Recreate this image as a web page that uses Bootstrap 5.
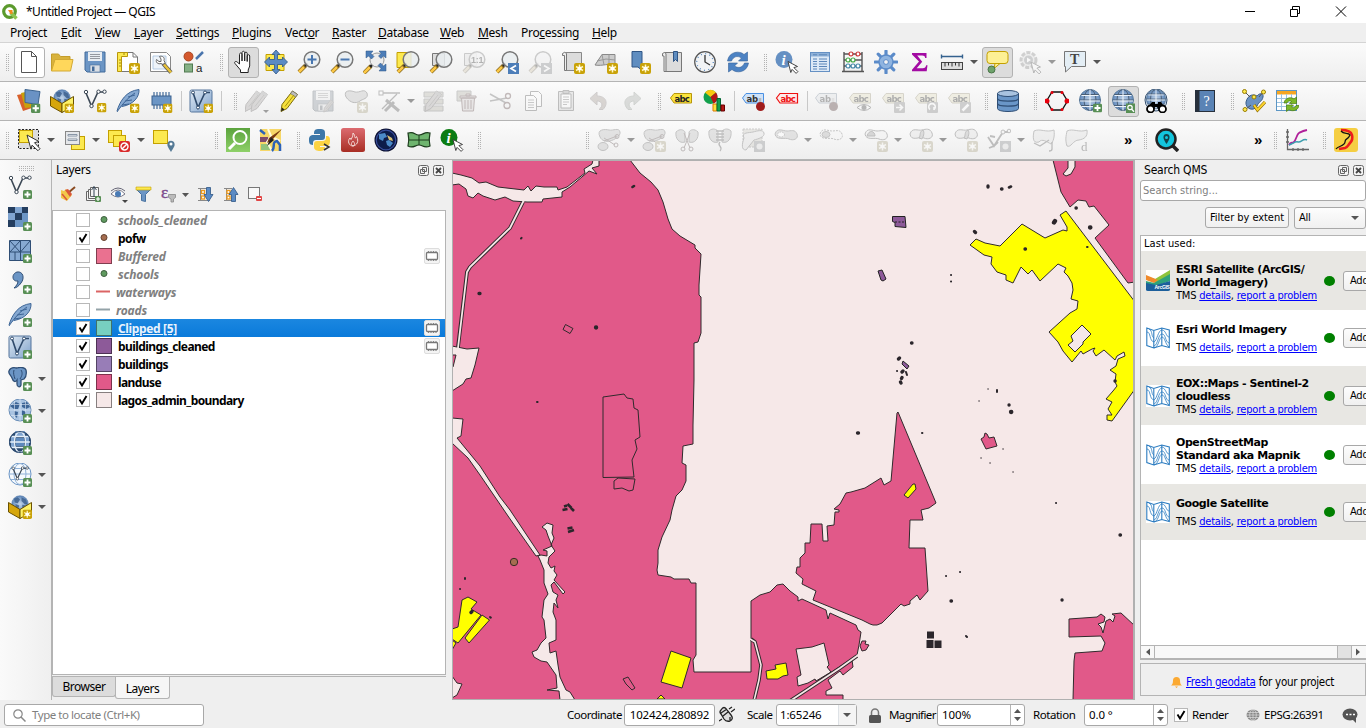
<!DOCTYPE html>
<html lang="en">
<head>
<meta charset="utf-8">
<title>*Untitled Project — QGIS</title>
<link href="https://cdn.jsdelivr.net/npm/bootstrap@5.3.0/dist/css/bootstrap.min.css" rel="stylesheet">
<script src="https://cdn.jsdelivr.net/npm/bootstrap@5.3.0/dist/js/bootstrap.bundle.min.js"></script>
<style>
html,body{height:728px;overflow:hidden}
body{width:1366px;background:#efefef;font:12px/16px "Noto Sans",sans-serif;color:#000;letter-spacing:-.3px}
svg{display:block;flex:none}
.titlebar{height:23px;background:#fff}
.ttl{letter-spacing:-.5px;margin-left:-1px}
.menubar{height:20px;background:#efefef;border-bottom:1px solid #d4d4d4;padding-left:10px;line-height:19px}
.menubar span{white-space:nowrap;flex:none}
.menubar span:nth-child(1){width:51px}.menubar span:nth-child(2){width:34px}.menubar span:nth-child(3){width:39px}
.menubar span:nth-child(4){width:42px}.menubar span:nth-child(5){width:56px}.menubar span:nth-child(6){width:53px}
.menubar span:nth-child(7){width:47px}.menubar span:nth-child(8){width:46px}.menubar span:nth-child(9){width:62px}
.menubar span:nth-child(10){width:38px}.menubar span:nth-child(11){width:43px}.menubar span:nth-child(12){width:71px}
.toolrow{height:39px;background:linear-gradient(#fbfbfb,#eeeeee);border-bottom:1px solid #b4b4b4;padding-left:12.5px;position:relative}
.toolrow::before,.grip::before,.side .hgrip{content:"";background:conic-gradient(#b2b2b2 25%,transparent 0) 0 0/2px 2px}
.toolrow::before{position:absolute;left:5px;top:11px;width:5px;height:17px}
.tool{width:33px;height:31px;flex:none;display:flex;align-items:center;padding-left:4.5px}
.tool svg,.side svg{width:24px;height:24px}
.dd{width:45px}
.dd::after,.arw{content:"";flex:none;border:4px solid transparent;border-top-color:#555;border-bottom:0;margin-left:6px}
.off svg{opacity:.34;filter:saturate(.2)}
.off.dd::after{border-top-color:#999}
.on{position:relative}
.on svg{position:relative}
.on::before{content:"";position:absolute;left:1px;top:0;width:31px;height:31px;border:1px solid #b2b2b2;border-radius:3px;background:#dcdcdc}
.on.lite::before{background:#fff}
.grip{width:16px;height:17px;flex:none;padding-left:8.5px}
.grip::before{display:block;width:5px;height:17px}
.vsep{width:7px;height:20px;flex:none;background:linear-gradient(#c8c8c8,#c8c8c8) 3px 0/1px 100% no-repeat}
.gap1{width:25px;flex:none}.gap2{width:92px;flex:none}.gap3{width:27.5px;flex:none}.gap4{width:67.5px;flex:none}
.more{width:13.5px;flex:none;font:700 15px/18px "Liberation Sans",sans-serif;padding-left:3px}
.side{width:52px;background:linear-gradient(90deg,#fafafa,#efefef);border-right:1px solid #b4b4b4;padding:6px 0 0 8px}
.side .hgrip{width:17px;height:5px;margin-left:10px}
.side .tl{height:32px;display:flex;align-items:center}
.dock{width:394px}
.docktitle{height:19px;padding:1px 2px 0 4px;line-height:19px}
.lt{margin-top:-2px}
.tree{height:465px;background:#fff;border:1px solid #b4b4b4;margin-top:1px}
.trow{height:18px;padding:2px 0 0 23px;font-weight:700;letter-spacing:-.58px;line-height:16px}
.trow.dim{font-style:italic;color:#808080;letter-spacing:-.15px}
.trow.sel{background:linear-gradient(#1b87e0,#0a7ada);color:#e8f2fc;letter-spacing:-.35px}
.chk{width:14px;height:14px;background:#fff;border:1px solid #b8b8b8;flex:none}
.trow .chk,.trow .sym,.trow .chip{position:relative;top:-1px}
.sym{width:16px;height:16px;margin:0 6px;flex:none}
.sw{border:1px solid rgba(0,0,0,.45)}
.chip{margin-left:auto;margin-right:5px;width:16px;height:16px;background:#f4f4f4;border:1px solid #ddd;border-radius:2px}
.tabx{border:1px solid #b4b4b4;border-top:0;border-radius:0 0 3px 3px;text-align:center;letter-spacing:-.5px}
.mapbox{width:683px;border:1px solid #b0b0b0;border-right:2px solid #b0b0b0;margin-left:6px}
.qms{width:226px;font-family:"DejaVu Sans Condensed","DejaVu Sans",sans-serif;font-size:11px;letter-spacing:-.2px}
.qt{font-size:12px}
.fld{background:#fff;border:1px solid #a8a8a8;border-radius:3px}
.btx{background:linear-gradient(#fdfdfd,#f0f0f0);border:1px solid #a8a8a8;border-radius:3px;white-space:nowrap}
.qlist{height:425px;background:#fff;border:1px solid #b4b4b4;border-right:0;overflow:hidden}
.qrow{padding-left:5px;line-height:13px}
.qrow:nth-child(even){background:#e8e7e3}
.qrow b{font-family:"DejaVu Sans",sans-serif;font-size:11px;letter-spacing:-.43px;display:block}
.qrow b.one{margin-bottom:5px}
.qrow u,.geo u{color:#00f}
.qtxt{width:148px;margin-left:6px;padding-top:1px;white-space:nowrap;flex:none}
.dot{width:11px;height:10px;border-radius:50%;background:#008000;flex:none}
.addb{width:40px;height:20px;line-height:18px;margin-left:8px;padding-left:6px;flex:none}
.gt{font-size:11.5px;letter-spacing:-.28px}
.status{height:28px;padding:2px 0 0 4px;font-size:11.5px;letter-spacing:-.45px}
.status>*{flex:none;white-space:nowrap}
</style>
</head>
<body>
<svg width="0" height="0" class="position-absolute">
<defs>
<linearGradient id="gBlue" x1="0" y1="0" x2="1" y2="1"><stop offset="0" stop-color="#dfe9f3"/><stop offset="1" stop-color="#7fa2cb"/></linearGradient>
<radialGradient id="gSky"><stop offset="0" stop-color="#c4d6ea"/><stop offset="1" stop-color="#5f88bb"/></radialGradient>
<linearGradient id="gGreen" x1="0" y1="0" x2="0" y2="1"><stop offset="0" stop-color="#5ba33d"/><stop offset="1" stop-color="#8ed068"/></linearGradient>
<linearGradient id="gLeather" x1="0" y1="0" x2="0" y2="1"><stop offset="0" stop-color="#dc6b70"/><stop offset="1" stop-color="#a82e24"/></linearGradient>
</defs>
</svg>
<svg class="d-none">
<symbol id="plus" viewBox="0 0 9 9"><rect width="9" height="9" rx="1.500" fill="#588f55"/><path d="M4.500 1.500v6M1.500 4.500h6" stroke="#fff" stroke-width="1.800"/></symbol>
<symbol id="star" viewBox="0 0 11 11"><rect width="11" height="11" rx="2" fill="#c9a208"/><path d="M5.500 1.500v8M2 3.500l7 4M9 3.500l-7 4" stroke="#fff6c0" stroke-width="1.500"/><circle cx="5.500" cy="5.500" r="2" fill="#fff"/></symbol>
<symbol id="lens" viewBox="0 0 24 24"><path d="M2 22l6.500-6.500" stroke="#8a6a20" stroke-width="4"/><path d="M2 22l5-5" stroke="#fcc845" stroke-width="2.500"/><path d="M8 16l2.500-2.500" stroke="#222" stroke-width="2.500"/><circle cx="15" cy="9.500" r="7.800" fill="#e9edf0" fill-opacity=".85" stroke="#777" stroke-width="1.500"/></symbol>
<symbol id="cursor" viewBox="0 0 12 12"><path d="M1 0l9.500 5-3.600 1.100 4 4-1.800 1.800-4-4L3.800 11z" fill="#fff" stroke="#333" stroke-width=".9"/></symbol>
<symbol id="new" viewBox="0 0 24 24"><path d="M4.500 1.500h10l5 5v16h-15z" fill="#fff" stroke="#555"/><path d="M14.500 1.500v5h5" fill="none" stroke="#555"/></symbol>
<symbol id="open" viewBox="0 0 24 24"><path d="M1.500 21V4h7l2 2.500H20V10" fill="#d8b23c" stroke="#c49d2b"/><path d="M1.500 21L5 9.500h18L20.500 21z" fill="#ffd75b" stroke="#d2a934"/></symbol>
<symbol id="save" viewBox="0 0 24 24"><path d="M2 2h20v20H4l-2-2z" fill="#6b95c5" stroke="#426a99"/><rect x="5" y="2" width="14" height="9" fill="#e8edf2"/><path d="M7 4.500h10M7 6.500h10M7 8.500h10" stroke="#8a8f95" stroke-width=".9"/><rect x="7" y="15" width="10" height="7" fill="#d9dee4" stroke="#426a99" stroke-width=".6"/><rect x="9" y="16.500" width="2.500" height="4.500" fill="#426a99"/></symbol>
<symbol id="layout" viewBox="0 0 24 24"><path d="M4 2.500h13l4.500 4.500v14.500H4z" fill="#fff" stroke="#777"/><path d="M17 2.500V7h4.500" fill="none" stroke="#777"/><path d="M1.500 2.500h10v4h-6v15h-4z" fill="#fce94f" stroke="#b8960c"/><path d="M3 10h2M3 13h2M3 16h2M8 3v2" stroke="#8a7000" stroke-width=".8"/><use href="#star" x="13" y="13" width="11" height="11"/></symbol>
<symbol id="manager" viewBox="0 0 24 24"><path d="M1.500 2.500h16l4 4v15h-20z" fill="#fff" stroke="#888"/><path d="M4 6h13v13H4z" fill="#eef4fa" stroke="#a4c0de" stroke-width=".8"/><path d="M14 13.500l8 9" stroke="#555" stroke-width="4"/><path d="M15 14.500l7 8" stroke="#e8c23a" stroke-width="2.600"/><path d="M10.500 6.500c3-1 5.500 1 4.500 4l1 2-2 2-2-1c-3 1-5.500-1-4.500-4l2.500 2h2V9z" fill="#fff" stroke="#666"/></symbol>
<symbol id="style" viewBox="0 0 24 24"><circle cx="6.500" cy="6.500" r="4.500" fill="#d4582d" stroke="#a84420"/><path d="M14 9l7-7" stroke="#4a75ad" stroke-width="2.500"/><rect x="2.500" y="14" width="8" height="8" fill="#85b085" stroke="#507a50"/><text x="14" y="21.500" font-family="Liberation Sans" font-size="11.500" fill="#222">a</text></symbol>
<symbol id="hand" viewBox="0 0 24 24"><path d="M9.500 22.500V20L4 13.500c-1.200-1.800 1-2.800 2.300-1.300L8.500 14V4.500c0-2 2.500-2 2.500 0V11 2.800c0-2 2.700-2 2.700 0V11 3.500c0-1.800 2.500-1.800 2.500 0V11.500 6c0-1.700 2.500-1.700 2.500 0v10l-1.500 4v2.500z" fill="#fff" stroke="#222"/></symbol>
<symbol id="pansel" viewBox="0 0 24 24"><path d="M2 4.500h18v16H2z" fill="#fce94f" stroke="#c4a000"/><path d="M12 0l4 4.500h-2.500v5h5V7l5 5-5 5v-2.500h-5v5H16L12 24l-4-4.500h2.500v-5h-5V17l-5-5 5-5v2.500h5v-5H8z" fill="#5b8bc4" stroke="#2f5585" stroke-width=".8"/></symbol>
<symbol id="zin" viewBox="0 0 24 24"><use href="#lens"/><path d="M15 5v9M10.500 9.500h9" stroke="#4977b0" stroke-width="2"/></symbol>
<symbol id="zout" viewBox="0 0 24 24"><use href="#lens"/><path d="M10.500 9.500h9" stroke="#4977b0" stroke-width="2"/></symbol>
<symbol id="zfull" viewBox="0 0 24 24"><path d="M1 23l7-7" stroke="#8a6a20" stroke-width="4"/><path d="M1 23l6-6" stroke="#fcc845" stroke-width="2.500"/><path d="M7 17l3-3" stroke="#222" stroke-width="2.500"/><circle cx="14" cy="10" r="7" fill="#eee" stroke="#999"/><path d="M3 1h7L8 3.500l3 3-2.500 2.500-3-3L3 8zM23 1h-7l2 2.500-2.500 2.500 2.500 2.500 2.500-2.500L23 8zM23 21h-7l2-2.500-3-3 2.500-2.500 3 3L23 14z" fill="#4c7db8" stroke="#2f5585" stroke-width=".5"/></symbol>
<symbol id="zsel" viewBox="0 0 24 24"><path d="M1 2.500h14v15H1z" fill="#fce94f" stroke="#c4a000"/><use href="#lens"/></symbol>
<symbol id="zlay" viewBox="0 0 24 24"><path d="M3.500 3.500h12v12h-12z" fill="#ddd" stroke="#777"/><use href="#lens"/></symbol>
<symbol id="znat" viewBox="0 0 24 24"><path d="M2.500 3.500h12v12h-12z" fill="#ddd" stroke="#777"/><use href="#lens"/><text x="9" y="13" font-family="Liberation Sans" font-weight="700" font-size="9" fill="#333">1:1</text></symbol>
<symbol id="zlast" viewBox="0 0 24 24"><use href="#lens"/><rect x="13" y="13" width="11" height="11" fill="#4c7db8"/><path d="M21 15.500l-5 3 5 3" fill="none" stroke="#fff" stroke-width="1.700"/></symbol>
<symbol id="znext" viewBox="0 0 24 24"><use href="#lens"/><rect x="13" y="13" width="11" height="11" fill="#789"/><path d="M16 15.500l5 3-5 3" fill="none" stroke="#fff" stroke-width="1.700"/></symbol>
<symbol id="mapv" viewBox="0 0 24 24"><path d="M4.500 2.500h16v18h-16z" fill="#dcdcdc" stroke="#888"/><path d="M1.500 3.500q2.500-2.500 4 0v17h-2v-15h-2z" fill="#eee" stroke="#777"/><use href="#star" x="13" y="13" width="11" height="11"/></symbol>
<symbol id="map3" viewBox="0 0 24 24"><path d="M1 15L8 4.500h13v11c-6-3-12 1-20-.5z" fill="#ccc" stroke="#888"/><path d="M3 11l9-2 9 1M8 4.500L10 15M15 4.500v10" stroke="#999" fill="none"/><use href="#star" x="13" y="13" width="11" height="11"/></symbol>
<symbol id="bkm" viewBox="0 0 24 24"><path d="M5 1.500h10v19l-4-3.500-2 0-4 0z" fill="#5f8dc0" stroke="#2f5585"/><use href="#star" x="13" y="13" width="11" height="11"/></symbol>
<symbol id="bkms" viewBox="0 0 24 24"><path d="M4.500 2.500h17v19h-17z" fill="#dcdcdc" stroke="#777"/><path d="M2.500 3.500q2-2 3.500 0v18H4V6H2.500z" fill="#eee" stroke="#777"/><path d="M13.500 1.500h4v10l-2-2-2 2z" fill="#5f8dc0" stroke="#2f5585"/></symbol>
<symbol id="clock" viewBox="0 0 24 24"><circle cx="12" cy="12" r="10.300" fill="#f1f3f5" stroke="#555" stroke-width="1.200"/><circle cx="12" cy="12" r="8.300" fill="none" stroke="#5f8dc0" stroke-width="1.300" stroke-dasharray="1 3.340"/><path d="M12 5v7l5 3" fill="none" stroke="#333" stroke-width="1.300"/></symbol>
<symbol id="refresh" viewBox="0 0 24 24"><path d="M1.500 11C3 1 14 .500 18 4.500l3.500-2.500v9h-9l3-3C11 5 7 7 5.500 11z" fill="#4c82c3" stroke="#366298" stroke-width=".6"/><path d="M22.500 13C21 23 10 23.500 6 19.500L2.500 22v-9h9l-3 3c4.500 3 8.500 1 10-3z" fill="#4c82c3" stroke="#366298" stroke-width=".6"/></symbol>
<symbol id="ident" viewBox="0 0 24 24"><circle cx="9" cy="9.500" r="8.500" fill="#6590c3"/><text x="6.500" y="15" font-family="Liberation Serif" font-style="italic" font-weight="700" font-size="15" fill="#fff">i</text><use href="#cursor" x="12" y="11" width="12" height="13"/></symbol>
<symbol id="table" viewBox="0 0 24 24"><rect x="2.500" y="2.500" width="19" height="19" fill="#dde9f6" stroke="#6590c3"/><path d="M3 3h18v3.500H3z" fill="#8fb1d8"/><path d="M5 9h4M5 11.500h4M5 14h4M5 16.500h4M5 19h4M11 9h8M11 11.500h8M11 14h8M11 16.500h8M11 19h8M5 4.800h4M11 4.800h8" stroke="#5b86ba"/></symbol>
<symbol id="abacus" viewBox="0 0 24 24"><path d="M3 2v19M21 2v19M1 21.500h22M3 4h18M3 10h18M3 16h18" stroke="#555" fill="none" stroke-width="1.400"/><g fill="#fff" stroke-width="1.200"><g stroke="#c33"><circle cx="10" cy="4" r="2"/><circle cx="17" cy="4" r="2"/></g><g stroke="#4a4"><circle cx="7" cy="10" r="2"/><circle cx="12" cy="10" r="2"/></g><g stroke="#48a"><circle cx="7" cy="16" r="2"/><circle cx="12" cy="16" r="2"/><circle cx="17" cy="16" r="2"/></g></g></symbol>
<symbol id="gear" viewBox="0 0 24 24"><path d="M12 1v22M1 12h22M4.200 4.200l15.600 15.600M19.800 4.200L4.200 19.800" stroke="#5b8bc9" stroke-width="3.200" stroke-linecap="round"/><circle cx="12" cy="12" r="7" fill="#8fb4e0" stroke="#5b8bc9" stroke-width="1.400"/><circle cx="12" cy="12" r="2.400" fill="#f4f4f4" stroke="#5b8bc9"/></symbol>
<symbol id="sigma" viewBox="0 0 24 24"><path d="M5 3h14.500v5h-1.300c-.4-2-1-2.600-3-2.600h-5l5 6.300-5.500 6.600h6c2.200 0 3-.9 3.500-3h1.300l-.8 6H5v-1.500l7-8.300L5 4.500z" fill="#a30ba3"/></symbol>
<symbol id="ruler" viewBox="0 0 24 24"><path d="M1.500 6.500h21M1.500 4.500v4M22.500 4.500v4" stroke="#34618e" stroke-width="1.400"/><rect x="1.500" y="12.500" width="21" height="7" fill="#ddd" stroke="#444"/><path d="M5 12.500v4M8.500 12.500v3M12 12.500v4M15.500 12.500v3M19 12.500v4" stroke="#333"/></symbol>
<symbol id="tips" viewBox="0 0 24 24"><rect x="2" y="1.500" width="21" height="12" rx="3" fill="#fdf095" stroke="#c4a000"/><path d="M10 13.500l-1 5 6-5z" fill="#fdf095" stroke="#c4a000"/><circle cx="6.500" cy="19.500" r="3.500" fill="#6fa36c" stroke="#4a7548"/></symbol>
<symbol id="action" viewBox="0 0 24 24"><circle cx="10.500" cy="10" r="7.500" fill="#ddd" stroke="#888" stroke-width="3" stroke-dasharray="4 1.500"/><circle cx="10.500" cy="10" r="4.500" fill="#789"/><path d="M9 7.500l4 2.500-4 2.500z" fill="#fff"/><use href="#cursor" x="12" y="12" width="12" height="12"/></symbol>
<symbol id="textann" viewBox="0 0 24 24"><path d="M1.500 1.500h21v15h-14l-6 5.500v-5.500h-1z" fill="#e4eef5" stroke="#777"/><text x="7" y="14" font-family="Liberation Serif" font-weight="700" font-size="14" fill="#444">T</text></symbol>
<symbol id="dsm" viewBox="0 0 24 24"><path d="M0 6l10-2 5 15-9 3z" fill="#d8602b"/><path d="M4 4l9-2 3 16-8 1z" fill="#caa00a"/><path d="M8 .5l15 2-2 13-13-2z" fill="#6a92c4" stroke="#3d648f"/><use href="#plus" x="14" y="14.500" width="9.500" height="9.500"/></symbol>
<symbol id="globe" viewBox="0 0 24 24"><circle cx="12" cy="12" r="11" fill="url(#gSky)" stroke="#4f76a6" stroke-width=".8"/><path d="M4 5l5-2 3 3-3 5-4-1zM14 3l6 3 2 7-4-1-4-4zM6 12l5 2-2 7-3-5zM15 13l5 1-2 6-3-2z" fill="#395d8a" fill-opacity=".8"/></symbol>
<symbol id="gpkg" viewBox="0 0 24 24"><use href="#globe" x="3" y="0" width="18" height="18"/><path d="M.5 7.500l11.500 7v9L.5 17z" fill="#d6a60c" stroke="#6b5200"/><path d="M12 14.500l11.500-7V17L12 23.500z" fill="#fdf26a" stroke="#6b5200"/></symbol>
<symbol id="newgpkg" viewBox="0 0 24 24"><use href="#gpkg"/><use href="#star" x="14.500" y="14.500" width="9.500" height="9.500"/></symbol>
<symbol id="vee" viewBox="0 0 24 24"><path d="M3 4l5.500 13L15 3h6" fill="none" stroke="#3b4754" stroke-width="1.600"/><g fill="#fff" stroke="#3b4754"><circle cx="3" cy="3" r="1.700"/><circle cx="8.500" cy="17" r="1.700"/><circle cx="15.500" cy="2.700" r="1.700"/><circle cx="21.500" cy="2.700" r="1.700"/></g></symbol>
<symbol id="newshp" viewBox="0 0 24 24"><use href="#vee"/><use href="#star" x="14" y="14" width="9.500" height="9.500"/></symbol>
<symbol id="feather" viewBox="0 0 24 24"><path d="M1 22C4 12 10 2 23 .5c.5 7-5 15-17 17" fill="#86a9d2" stroke="#3d6596"/><path d="M1 23C7 14 13 8 19 4M9 12l7-1M6 16l7-1M12 8l7-2" fill="none" stroke="#3d6596"/></symbol>
<symbol id="newspl" viewBox="0 0 24 24"><use href="#feather"/><use href="#star" x="14" y="14.500" width="9.500" height="9.500"/></symbol>
<symbol id="chip" viewBox="0 0 24 24"><path d="M5 3v17M8 3v17M11 3v17M14 3v17M17 3v17M20 3v17" stroke="#426a99" stroke-width="1.200"/><rect x="3" y="7" width="19" height="9" fill="#6b95c5" stroke="#3b608d"/></symbol>
<symbol id="newmem" viewBox="0 0 24 24"><use href="#chip"/><use href="#star" x="14" y="14.500" width="9.500" height="9.500"/></symbol>
<symbol id="virt" viewBox="0 0 24 24"><rect x="1" y="1" width="22" height="22" rx="1.500" fill="url(#gBlue)" stroke="#54759c"/><path d="M4 3.500l5 15 7-15h5" fill="none" stroke="#2f4a6b" stroke-width="1.600"/><g fill="#fff" stroke="#2f4a6b"><circle cx="4" cy="3.500" r="1.500"/><circle cx="9" cy="18.500" r="1.500"/><circle cx="16" cy="3.500" r="1.500"/></g></symbol>
<symbol id="newvirt" viewBox="0 0 24 24"><use href="#virt"/><use href="#star" x="14.500" y="14.500" width="9.500" height="9.500"/></symbol>
<symbol id="pencil" viewBox="0 0 24 24"><path d="M4 15.500L14.500 2l5 3.500L9 19.500 3 22.500z" fill="#f5e03c" stroke="#7d6c0a"/><path d="M14.500 2l5 3.500-2 2.500-5-3.500z" fill="#bbb" stroke="#666" stroke-width=".6"/><path d="M3 22.500l1-4 2.500 2z" fill="#222"/><path d="M7 17.500L16 6" stroke="#a8920d"/></symbol>
<symbol id="pencilg" viewBox="0 0 24 24"><path d="M4 15.500L14.500 2l5 3.500L9 19.500 3 22.500z" fill="#b5a09a" stroke="#6d5c5a"/><path d="M14.500 2l5 3.500-2 2.500-5-3.500z" fill="#999"/><path d="M7 17.500L16 6" stroke="#776"/></symbol>
<symbol id="pencils" viewBox="0 0 24 24"><use href="#pencilg" x="-3" y="0" width="24" height="24"/><use href="#pencilg" x="3" y="0" width="24" height="24"/><path d="M18 21h6l-3 3z" fill="#000"/></symbol>
<symbol id="saveedit" viewBox="0 0 24 24"><use href="#save"/><use href="#pencilg" x="11" y="10" width="14" height="14"/></symbol>
<symbol id="blob" viewBox="0 0 24 24"><path d="M2 8C-1 1 6 1 11 3c5 1 9-4 12 1 2 6-5 6-7 8-4 3-10 2-14-4z" fill="#bbb" stroke="#555"/></symbol>
<symbol id="addpoly" viewBox="0 0 24 24"><use href="#blob"/><use href="#star" x="13" y="13" width="11" height="11"/></symbol>
<symbol id="vertex" viewBox="0 0 24 24"><path d="M3 4h20M5 20L20 5" stroke="#555" stroke-width="1.300"/><rect x="2" y="2" width="4" height="4" fill="#fff" stroke="#555"/><path d="M9 11l13 11M8 22l9-9" stroke="#555" stroke-width="3"/></symbol>
<symbol id="multi" viewBox="0 0 24 24"><path d="M2 3h19v5H2zM2 10h19v5H2zM2 17h19v5H2z" fill="#b9b478" stroke="#777"/><use href="#pencilg"/></symbol>
<symbol id="trash" viewBox="0 0 24 24"><path d="M2 2h14v10H2z" fill="#b9b478" stroke="#777"/><path d="M5 7h16v2H5zM6.500 9h13l-1 13h-11zM11 5h4v2h-4zM10 11v9M13 11v9M16 11v9" fill="#e2c5c5" stroke="#a33"/></symbol>
<symbol id="cut" viewBox="0 0 24 24"><path d="M2 5l16 9M2 12l17-3" stroke="#666" stroke-width="1.500"/><circle cx="20" cy="7" r="2.500" fill="none" stroke="#a33" stroke-width="1.300"/><circle cx="19" cy="16.500" r="3" fill="none" stroke="#a33" stroke-width="1.300"/></symbol>
<symbol id="copy" viewBox="0 0 24 24"><path d="M9.500 2.500h8l3 3v12h-11z" fill="#fff" stroke="#555"/><path d="M4.500 6.500h8l3 3v12h-11z" fill="#fff" stroke="#555"/><path d="M7 11h6M7 13.500h6M7 16h6M7 18.500h6" stroke="#777"/></symbol>
<symbol id="paste" viewBox="0 0 24 24"><path d="M4.500 2.500h15v19h-15z" fill="#ccc" stroke="#555"/><path d="M7 5h10v14H7z" fill="#fff" stroke="#555"/><path d="M9 1.500h6v3H9z" fill="#999" stroke="#555"/><path d="M9 8h6M9 10.500h6M9 13h6M9 15.500h4" stroke="#777"/></symbol>
<symbol id="undo" viewBox="0 0 24 24"><path d="M3 9.500l7-6.500v4c9 0 12 7 6 13.500h-4c5-4 3-8.500-2-8.500v4z" fill="#c89070" stroke="#977"/></symbol>
<symbol id="redo" viewBox="0 0 24 24"><path d="M21 9.500L14 3v4C5 7 2 14 8 20.500h4c-5-4-3-8.500 2-8.500v4z" fill="#9ab09a" stroke="#797"/></symbol>
<symbol id="lblY" viewBox="0 0 24 24"><path d="M1.500 9L5 4.500h17.500v9.500H5z" fill="#fbe33c" stroke="#b8960c"/><text x="5.500" y="12.500" font-family="DejaVu Sans" font-weight="700" font-size="8.500" textLength="15" fill="#222">abc</text></symbol>
<symbol id="diag" viewBox="0 0 24 24"><circle cx="8.500" cy="8" r="7" fill="#12a04c"/><path d="M8.500 8L3 3.500a7 7 0 0 1 11 0z" fill="#f9c80e"/><path d="M8.500 8L14 3.500A7 7 0 0 1 11.500 14.500z" fill="#b61616"/><path d="M11 15h4v7h-4z" fill="#fbe33c" stroke="#d70"/><path d="M15 9.500h3.500V22H15z" fill="#12a04c" stroke="#063"/><path d="M19 16h3.500v6H19z" fill="#b61616" stroke="#600"/></symbol>
<symbol id="lblB" viewBox="0 0 24 24"><path d="M.5 9L4 4.500h17.500v9.500H4z" fill="#cfe2f8" stroke="#4a90e2"/><text x="4.500" y="12.500" font-family="DejaVu Sans" font-weight="700" font-size="8.500" fill="#333">ab</text><path d="M18 16V9" stroke="#bbb" stroke-width="2.500"/><circle cx="18.500" cy="17.500" r="4.500" fill="#a01c1c"/></symbol>
<symbol id="lblR" viewBox="0 0 24 24"><path d="M1.500 9L5 4.500h17.500v9.500H5z" fill="#fdeaea" stroke="#e11" stroke-width="1.200"/><text x="5.500" y="12.500" font-family="DejaVu Sans" font-weight="700" font-size="8.500" textLength="15" fill="#e11">abc</text></symbol>
<symbol id="lblEye" viewBox="0 0 24 24"><use href="#lblY"/><path d="M9 18.500q7-6 14 0-7 6-14 0z" fill="#fff" stroke="#444"/><circle cx="16" cy="18.500" r="2.500" fill="#444"/></symbol>
<symbol id="lblMv" viewBox="0 0 24 24"><use href="#lblY"/><rect x="13" y="13" width="11" height="11" rx="1" fill="#888"/><path d="M15 18.500h6M18.500 15.500l3 3-3 3" fill="none" stroke="#fff" stroke-width="1.600"/></symbol>
<symbol id="lblRot" viewBox="0 0 24 24"><use href="#lblY"/><rect x="13" y="13" width="11" height="11" rx="1" fill="#888"/><path d="M16 20.500a3.300 3.300 0 1 1 4 0M20 18v3" fill="none" stroke="#fff" stroke-width="1.600"/></symbol>
<symbol id="lblEd" viewBox="0 0 24 24"><use href="#lblY"/><rect x="13" y="13" width="11" height="11" rx="1" fill="#888"/><path d="M15.500 21.500l6-6" stroke="#fff" stroke-width="2.500"/></symbol>
<symbol id="db" viewBox="0 0 24 24"><path d="M1.500 4.500v15c0 4 21 4 21 0v-15z" fill="#6a96c8" stroke="#2f4e75"/><ellipse cx="12" cy="4.500" rx="10.500" ry="3" fill="#a9c3e0" stroke="#2f4e75"/><path d="M1.500 9.500c0 3.500 21 3.500 21 0M1.500 14.500c0 3.500 21 3.500 21 0" fill="none" stroke="#2f4e75" stroke-width="1.300"/></symbol>
<symbol id="hex" viewBox="0 0 24 24"><path d="M1.500 12L7 3h10l5.500 9-5.500 9H7z" fill="none" stroke="#111" stroke-width="1.300"/><g fill="#e8000d"><circle cx="2" cy="12" r="2.500"/><circle cx="22" cy="12" r="2.500"/><circle cx="7" cy="3.500" r="1.500"/><circle cx="17" cy="3.500" r="1.500"/><circle cx="7" cy="20.500" r="1.500"/><circle cx="17" cy="20.500" r="1.500"/></g></symbol>
<symbol id="wire" viewBox="0 0 24 24"><circle cx="12" cy="11" r="10.500" fill="url(#gSky)" stroke="#5f7f9f"/><path d="M1.500 11h21M3 5.500h18M3 16.500h18" stroke="#4a5f76" stroke-width="1"/><ellipse cx="12" cy="11" rx="6" ry="10.500" fill="none" stroke="#4a5f76" stroke-width="1"/><path d="M12 .5v21M2 12h20M3.500 6.500h17M3.500 17.500h17" stroke="#eef4fa"/></symbol>
<symbol id="wirep" viewBox="0 0 24 24"><use href="#wire"/><use href="#plus" x="15" y="14.500" width="9" height="9"/></symbol>
<symbol id="wires" viewBox="0 0 24 24"><use href="#wire"/><rect x="15" y="14.500" width="9" height="9.500" fill="#588f55"/><circle cx="19" cy="18.500" r="2.200" fill="none" stroke="#fff" stroke-width="1.200"/><path d="M20.500 20l2.500 2.800" stroke="#fff" stroke-width="1.300"/></symbol>
<symbol id="binoc" viewBox="0 0 24 24"><circle cx="12" cy="11" r="11" fill="#dfe9f5" stroke="#35506f"/><use href="#wire" x="1" y="0" width="22" height="22"/><path d="M8 13h3v2h3v-2h3l4 6v3h-6l-2-4h-2l-2 4H3v-3z" fill="#000"/><circle cx="6.500" cy="20" r="3.500" fill="#fff" stroke="#000" stroke-width="1.800"/><circle cx="18.500" cy="20" r="3.500" fill="#fff" stroke="#000" stroke-width="1.800"/></symbol>
<symbol id="help" viewBox="0 0 24 24"><rect x="2.500" y="1.500" width="19" height="21" fill="#5a83b5" stroke="#27303c"/><path d="M2.500 1.500h4v21h-4z" fill="#27303c"/><text x="10.500" y="17" font-family="Liberation Serif" font-size="14" fill="#fff">?</text></symbol>
<symbol id="topo" viewBox="0 0 24 24"><path d="M4 13c2-8 8-8 11-6 3-4 7-2 6 1-1 5-4 4-6 9-3 6-12 3-11-4z" fill="#6a92c4" stroke="#3b5d88"/><path d="M3 3l5 5M21 3l-4 5M4 20l5-4" stroke="#555"/><g fill="#fce94f" stroke="#9a7d00"><circle cx="2.500" cy="2.500" r="2"/><circle cx="21.500" cy="3" r="2"/><circle cx="12" cy="8" r="2"/><circle cx="3" cy="20.500" r="2"/></g><path d="M12 16l3.500 5L23 13" fill="none" stroke="#8a6a00" stroke-width="3.200"/><path d="M12 16l3.500 5L23 13" fill="none" stroke="#fbd22e" stroke-width="2"/></symbol>
<symbol id="tabref" viewBox="0 0 24 24"><rect x="1.500" y="1.500" width="20" height="20" fill="#fff" stroke="#5c96c4"/><path d="M2 2h19v3.500H2z" fill="#f5a623"/><path d="M2 9.500h19M2 13.500h19M2 17.500h19M6.500 5v16M11.500 5v16M16.500 5v16" stroke="#9cc3e0"/><path d="M9 14c1-6 8-6 10-4l2.500-2v6.500h-7l2-2c-2-1.500-4 0-4.500 1.500z" fill="#7cb928" stroke="#4a7d10" stroke-width=".7"/><path d="M24 16.500c-1 6-8 6-10 4l-2.500 2V16h7l-2 2c2 1.500 4 0 4.500-1.500z" fill="#7cb928" stroke="#4a7d10" stroke-width=".7"/></symbol>
<symbol id="selrect" viewBox="0 0 24 24"><rect x="1.500" y="1.500" width="20" height="19" fill="#ddd" stroke="#222" stroke-dasharray="2 1.500"/><rect x="2.500" y="2.500" width="13" height="12" fill="#fce94f" stroke="#c4a000"/><path d="M10 7l12 6.500-4.500 1.200 5.500 6-2 2-6-5.500-1 4z" fill="#fff" stroke="#333"/></symbol>
<symbol id="selform" viewBox="0 0 24 24"><rect x="9.500" y="8.500" width="13" height="13" fill="#fce94f" stroke="#c4a000"/><rect x="3.500" y="3.500" width="14" height="13" fill="#e5e7ea" stroke="#888"/><path d="M6 6.500h9v1.500H6zM6 11h9v1.500H6z" fill="#fff" stroke="#8895a5"/></symbol>
<symbol id="desel" viewBox="0 0 24 24"><rect x="1.500" y="2.500" width="13" height="12" fill="#fce94f" stroke="#c4a000"/><rect x="6.500" y="7.500" width="12" height="11" fill="#fce94f" stroke="#c4a000"/><rect x="12" y="13" width="11" height="11" rx="2" fill="#d92b2b"/><circle cx="17.500" cy="18.500" r="3.500" fill="none" stroke="#fff" stroke-width="1.400"/><path d="M15 21l5-5" stroke="#fff" stroke-width="1.400"/></symbol>
<symbol id="selloc" viewBox="0 0 24 24"><rect x="1.500" y="2.500" width="14" height="13" fill="#fce94f" stroke="#c4a000"/><path d="M19 24c-3-5-4-6-3.500-8.500a3.600 3.600 0 0 1 7 0C23 18 22 19 19 24z" fill="#557a96"/><circle cx="19" cy="16" r="1.500" fill="#fff"/></symbol>
<symbol id="gsearch" viewBox="0 0 24 24"><rect width="24" height="24" fill="url(#gGreen)"/><circle cx="14" cy="9.500" r="6.500" fill="none" stroke="#fff" stroke-width="2"/><path d="M9 15l-6 6" stroke="#fff" stroke-width="3"/></symbol>
<symbol id="osm" viewBox="0 0 24 24"><rect x="1" y="1" width="21" height="22" fill="#f6d768"/><path d="M1 9h8v5H1z" fill="#7e4b6b"/><path d="M2 16h9v6H2z" fill="#93c47d"/><path d="M9 1l3 7-4 6 5 9M15 10l6 3" fill="none" stroke="#fffbe0" stroke-width="2"/><path d="M1 2l5 4M13 23c4-4-1-9 5-10l3 4v6" fill="none" stroke="#2c62b8" stroke-width="2.500"/><path d="M23 1L13 12l-5 3 2-5z" fill="#7a3a12"/><path d="M12 9l3 3-7 6z" fill="#222"/></symbol>
<symbol id="python" viewBox="0 0 24 24"><path d="M6 6c0-4 1-5 5.500-5S17 2 17 5v4c0 2-1 3-3 3H8c-2 0-3 1-3 3v2C1 17 1 14 1 11.500S2 7 6 7h6V6z" fill="#3d77a8"/><path d="M18 8c4 0 4 2 4 5s-1 5-4 5h-6v1h5c0 3-2 4-5 4s-6-1-6-4v-3c0-2 1-3 3-3h5c3 0 4-1 4-3z" fill="#fbd343"/><path d="M16 16l5 3-5 3" fill="none" stroke="#333" stroke-width="1.500"/></symbol>
<symbol id="flame" viewBox="0 0 24 24"><rect width="24" height="24" rx="2.500" fill="url(#gLeather)"/><path d="M12 5c3 3 .5 4 2.500 5l1-1.500c3 5 0 9-3.500 9.500-4 0-6-5-3-8l1 1.500c1-2 2-3 2-6.500zM12 18c-3-1-1-4 0-5 1 1 3 4 0 5z" fill="none" stroke="#f4dcd8"/></symbol>
<symbol id="earth" viewBox="0 0 24 24"><circle cx="12" cy="12" r="11.500" fill="#0b1030"/><circle cx="12" cy="12" r="9.800" fill="#0d1c4a" stroke="#3a4f9c" stroke-width="1.200"/><path d="M5 6l6-1 2 4-3 1-1 3-4-2zM12 13l3-1 4 3-3 4-3-2z" fill="#4b8ac8"/><path d="M13 7l5 3 1 3-4-1z" fill="#d8c078"/></symbol>
<symbol id="bow" viewBox="0 0 24 24"><path d="M1 5c7-2 6 2 11 2s5-4 11-2c-1 4-1 9 0 13-6 3-7-1-11-1s-6 4-11 1c1-4 1-9 0-13z" fill="#6fb56f" stroke="#1c3a1c" stroke-width="1.200"/><path d="M1 12h22M12 7v10" stroke="#1c3a1c"/></symbol>
<symbol id="gident" viewBox="0 0 24 24"><circle cx="9" cy="9.500" r="8.500" fill="#0a7c12"/><text x="6.500" y="15" font-family="Liberation Serif" font-style="italic" font-weight="700" font-size="15" fill="#fff">i</text><use href="#cursor" x="12" y="11" width="12" height="13"/></symbol>
<symbol id="splitf" viewBox="0 0 24 24"><path d="M3 9C-1 1 8 1 12 2s10-3 11 2c1 4-6 8-10 9S5 13 3 9z" fill="#bbb" stroke="#666"/><ellipse cx="6" cy="18.500" rx="5" ry="4" fill="#bbb" stroke="#666"/><path d="M7 13l13-5M7 10l11 7" stroke="#844"/><circle cx="20" cy="8.500" r="2" fill="none" stroke="#844"/><circle cx="19" cy="17" r="2" fill="none" stroke="#844"/></symbol>
<symbol id="splitp" viewBox="0 0 24 24"><use href="#splitf"/><use href="#star" x="13" y="13" width="11" height="11"/></symbol>
<symbol id="splitv" viewBox="0 0 24 24"><path d="M10 14C4 16 0 10 1 4c4-4 8-2 9 0zM14 14c6 2 10-4 9-10-4-4-8-2-9 0z" fill="#bbb" stroke="#666"/><path d="M9 20l6-15M15 20L9 5" stroke="#844"/><circle cx="8" cy="21" r="2" fill="none" stroke="#844"/><circle cx="16" cy="21" r="2" fill="none" stroke="#844"/></symbol>
<symbol id="merge" viewBox="0 0 24 24"><path d="M10 14C4 16 0 10 1 3c4-4 8-1 9 0zM14 14c6 2 10-4 9-11-4-4-8-1-9 0z" fill="#bbb" stroke="#666"/><path d="M8 3h8M8 6h8M8 9h8M8 12h8M12 14c-4 4 4 4 0 9" fill="none" stroke="#555" stroke-width="1.300"/></symbol>
<symbol id="reshape" viewBox="0 0 24 24"><rect x="2" y="1" width="19" height="18" fill="#cdc69a" stroke="#777" stroke-dasharray="2 1"/><path d="M3 10C0 4 8 5 12 4s10-3 11 1c1 4-6 6-10 7l-8 10c-5 0-4-6-2-12z" fill="#ddd" stroke="#666"/><rect x="13" y="13" width="11" height="11" fill="#789"/><circle cx="18.500" cy="18.500" r="3" fill="#ddd"/></symbol>
<symbol id="ring" viewBox="0 0 24 24"><path d="M1 6C3-1 9 3 13 3s8-2 10 3-4 7-8 5S2 13 1 6z" fill="#bbb" stroke="#666"/><ellipse cx="7" cy="6.500" rx="3.500" ry="2.500" fill="#fff" stroke="#666" stroke-dasharray="1.500 1"/></symbol>
<symbol id="ringo" viewBox="0 0 24 24"><path d="M1 6C3-1 9 3 13 3s8-2 10 3-4 7-8 5S2 13 1 6z" fill="#f4f4f4" stroke="#666" stroke-dasharray="2 1"/><ellipse cx="7" cy="6.500" rx="4" ry="3" fill="#aaa" stroke="#666"/></symbol>
<symbol id="ringn" viewBox="0 0 24 24"><path d="M1 6C3-1 9 3 13 3s8-2 10 3-4 7-8 5S2 13 1 6z" fill="#eee" stroke="#555"/><path d="M3 8c2-7 8-5 8 0z" fill="#999" stroke="#555"/><use href="#star" x="13" y="13" width="11" height="11"/></symbol>
<symbol id="ringm" viewBox="0 0 24 24"><path d="M1 6C3-1 9 3 13 2s8-2 10 3-4 7-8 5S2 14 1 6z" fill="#ddd" stroke="#555"/><path d="M10 10c2-3 0-6 4-8 2 3 0 7-1 9z" fill="#aaa" stroke="#555"/><use href="#star" x="13" y="13" width="11" height="11"/></symbol>
<symbol id="veeoff" viewBox="0 0 24 24"><path d="M1 9l6 9L16 4h6M2 20l5-2 4-4M3 8l5 1" fill="none" stroke="#555" stroke-width="1.800"/><g fill="#eee" stroke="#555"><circle cx="16" cy="4" r="2"/><circle cx="22" cy="3" r="1.800"/></g><rect x="13" y="13" width="11" height="11" fill="#789"/><circle cx="18.500" cy="18.500" r="3" fill="#ddd"/></symbol>
<symbol id="pj" viewBox="0 0 24 24"><path d="M2 3c6-3 12 2 20-1 1 7-1 12-3 14-4-2-9-6-12-2C0 16 1 8 2 3z" fill="#ddd" stroke="#666"/><path d="M2 15l6 3 9-6M20 14v7q0 2-3 2" fill="none" stroke="#555" stroke-width="1.300"/></symbol>
<symbol id="pd" viewBox="0 0 24 24"><path d="M2 3c6-3 12 2 20-1 1 7-3 9-8 10-6 0-8 8-12 6C0 12 1 8 2 3z" fill="#ddd" stroke="#666"/><text x="16" y="23" font-family="Liberation Serif" font-size="13" fill="#444">d</text></symbol>
<symbol id="cy" viewBox="0 0 24 24"><path d="M16 16l7 7" stroke="#222" stroke-width="3.500"/><circle cx="11" cy="11" r="9.500" fill="#13c5dd" stroke="#222" stroke-width="2.500"/><path d="M11.500 16c-2.500-4-3-5-3-7a3 3 0 0 1 6 0c0 2-.5 3-3 7z" fill="#13414a"/><circle cx="11.500" cy="9.500" r="1.500" fill="#13c5dd"/></symbol>
<symbol id="profile" viewBox="0 0 24 24"><path d="M2.500 1v20.500H24M1 4h3M1 9h3M1 14h3M8 20v3M13 20v3M18 20v3" fill="none" stroke="#666" stroke-width="1.300"/><path d="M4 17c2-4 3-1 5-3s3-8 5-9 3-2 8-3" fill="none" stroke="#b0209a" stroke-width="1.800"/><path d="M4 17c4-1 6-4 9-3s5-4 9-2" fill="none" stroke="#3c9dad" stroke-width="1.500"/></symbol>
<symbol id="rv" viewBox="0 0 24 24"><rect y="0" width="24" height="24" rx="3" fill="#f5ce42"/><path d="M7 2c5 0 10 1 11 5s0 6-2 8-2 4-5 5l-6 1" fill="none" stroke="#ee1c1c" stroke-width="2.600"/><path d="M7 3c3 4 7 1 9 4-2 5-5 3-5 7s-7 4-9 7" fill="none" stroke="#111" stroke-width="1.300"/></symbol>
<symbol id="avec" viewBox="0 0 24 24"><use href="#vee"/><use href="#plus" x="15" y="15" width="9" height="9"/></symbol>
<symbol id="aras" viewBox="0 0 24 24"><path d="M0 0h20v20H0z" fill="#6b95c5"/><path d="M0 0h7v6H0zM14 0h6v6h-6zM7 6h7v7H7zM0 13h7v7H0z" fill="#243e5f"/><path d="M7 0h7v6H7zM0 6h7v7H0z" fill="#7fa4d0"/><use href="#plus" x="15" y="15" width="9" height="9"/></symbol>
<symbol id="amesh" viewBox="0 0 24 24"><path d="M1.500 1.500h21v20h-21z" fill="#86a9d2" stroke="#2f4e75"/><path d="M2 13h20M12.500 2v20M2 2l10 11M12 2L2 13M22 2L12.500 13M7 13v9" stroke="#2f4e75"/><use href="#plus" x="15" y="15" width="9" height="9"/></symbol>
<symbol id="acom" viewBox="0 0 24 24"><path d="M9 1c6-1 8 6 4 11-2 3-5 5-7 5 2-2 4-4 4-7C4 11 3 3 9 1z" fill="#6b95c5" stroke="#2f4e75"/><use href="#plus" x="15" y="14" width="9" height="9"/></symbol>
<symbol id="aspl" viewBox="0 0 24 24"><use href="#feather"/><use href="#plus" x="15" y="15" width="9" height="9"/></symbol>
<symbol id="avirt" viewBox="0 0 24 24"><use href="#virt"/><use href="#plus" x="15" y="15" width="9" height="9"/></symbol>
<symbol id="apg" viewBox="0 0 24 24"><path d="M1 4c2-5 6-3 8-3 3-1 8-1 9 2 1 5-1 8-2 9l-3 1v5c-1 3-4 2-4-1v-4c-2 3-4 1-5-2S0 7 1 4z" fill="#6b95c5" stroke="#2f4e75" stroke-width="1.300"/><path d="M6 3c-1 3 0 6 1 9M13 3c2 3 1 6-1 9" fill="none" stroke="#2f4e75"/><use href="#plus" x="15" y="15" width="9" height="9"/></symbol>
<symbol id="awms" viewBox="0 0 24 24"><circle cx="12" cy="11" r="11" fill="#a9c4e2" stroke="#6b8fb8"/><path d="M2 7l6-4 4 2-2 5-4 0zM14 4l5-1 3 5-4 2-4-2zM6 12l4 1-1 6-3-3zM14 11l4 2 0 4-4 0z" fill="#3d6596"/><path d="M1 11h22M3 5.500h18M3 16.500h18M12 0v22M6.500 2v18M17.500 2v18" stroke="#dfeaf6" stroke-width=".8" opacity=".75"/><use href="#plus" x="15" y="15" width="9" height="9"/></symbol>
<symbol id="axyz" viewBox="0 0 24 24"><circle cx="12" cy="11" r="11" fill="#2b4a70"/><path d="M7 0h10v6h4v10H3V6h4z" fill="#7fa4d0"/><path d="M7 6h10v10H7z" fill="#2b4a70"/><path d="M8 7h8v8H8z" fill="#5d89bd"/><path d="M1 11h22M3 5.500h18M3 16.500h18" stroke="#e4eef8" stroke-width="1.300"/><ellipse cx="12" cy="11" rx="5.500" ry="10.500" fill="none" stroke="#e4eef8" stroke-width="1.300"/><circle cx="12" cy="11" r="10.500" fill="none" stroke="#2b4a70"/><use href="#plus" x="15" y="15" width="9" height="9"/></symbol>
<symbol id="awfs" viewBox="0 0 24 24"><circle cx="12" cy="11" r="11" fill="#f5f9fd" stroke="#6b95c5"/><path d="M1 11h22M3 5.500h18M3 16.500h18" stroke="#8fb1d8"/><ellipse cx="12" cy="11" rx="6" ry="10.500" fill="none" stroke="#8fb1d8"/><use href="#vee" x="3" y="3" width="18" height="18"/><use href="#plus" x="15" y="15" width="9" height="9"/></symbol>
<symbol id="tick" viewBox="0 0 12 12"><path d="M2.500 5.500L5 9.500 9.500 2" fill="none" stroke="#000" stroke-width="1.900"/></symbol>
<symbol id="memchip" viewBox="0 0 14 14"><path d="M3.500 2v10M6 2v10M8.500 2v10M11 2v10" stroke="#888"/><rect x="1.500" y="3.500" width="11" height="7" rx="1" fill="#fff" stroke="#777" stroke-width="1.300"/></symbol>
<symbol id="float" viewBox="0 0 11 11"><rect x=".5" y=".5" width="10" height="10" rx="2" fill="#f4f4f4" stroke="#666"/><path d="M4.500 2.500h4v4h-4zM2.500 4.500h4v4h-4z" fill="#f4f4f4" stroke="#666"/></symbol>
<symbol id="close" viewBox="0 0 11 11"><rect x=".5" y=".5" width="10" height="10" rx="2" fill="#f4f4f4" stroke="#666"/><path d="M3 3l5 5M8 3L3 8" stroke="#444" stroke-width="1.800"/></symbol>
<symbol id="qmap" viewBox="0 0 24 24"><rect width="24" height="22" y="1" fill="#fff"/><path d="M.8 2l7 2.500 8-2.500 7.500 2v17.500l-7.500-2-8 2.500-7-2.500zM7.800 4.500V22M15.800 2v17.500" fill="none" stroke="#2c7cc0" stroke-width="1.100"/><path d="M1 6c4 0 2 9 7 10M3 3c4 2 2 8 5 9M8 20c4-1 4-12 8-12 4 0 3 8 7 9M8 16c3-1 4-12 8-12s4 7 7 7M8 22c5-1 5-11 8-11s3 7 7 10" fill="none" stroke="#2c7cc0" stroke-width=".8"/></symbol>
</svg>

<header class="titlebar d-flex align-items-center">
  <svg width="16" height="16" viewBox="0 0 16 16" class="ms-1 me-1" style="margin-left:2px!important"><circle cx="7.500" cy="7.500" r="5.800" fill="none" stroke="#5b9a2d" stroke-width="3.200"/><path d="M8.500 8.500l6 6" stroke="#8fc450" stroke-width="3.600"/><path d="M6 6h4.500v4h-2z" fill="#f08a1d"/></svg>
  <span class="ttl ms-0 ps-1">*Untitled Project — QGIS</span>
  <svg class="ms-auto" width="122" height="22" viewBox="0 0 122 22" fill="none" stroke="#000"><path d="M1 10.500h10"/><path d="M46.500 8.500h7v7h-7zM48.500 8v-2.500h7v7H54" /><path d="M92 5.500l10 10M102 5.500l-10 10"/></svg>
</header>
<nav class="menubar d-flex">
  <span>Pro<u>j</u>ect</span><span><u>E</u>dit</span><span><u>V</u>iew</span><span><u>L</u>ayer</span><span><u>S</u>ettings</span><span><u>P</u>lugins</span><span>Vect<u>o</u>r</span><span><u>R</u>aster</span><span><u>D</u>atabase</span><span><u>W</u>eb</span><span><u>M</u>esh</span><span>Pro<u>c</u>essing</span><span><u>H</u>elp</span>
</nav>

<div class="toolrow d-flex align-items-center">
  <div class="tool on lite"><svg><use href="#new"/></svg></div><div class="tool"><svg><use href="#open"/></svg></div><div class="tool"><svg><use href="#save"/></svg></div><div class="tool"><svg><use href="#layout"/></svg></div><div class="tool"><svg><use href="#manager"/></svg></div><div class="tool"><svg><use href="#style"/></svg></div>
  <div class="grip"></div>
  <div class="tool on"><svg><use href="#hand"/></svg></div><div class="tool"><svg><use href="#pansel"/></svg></div><div class="tool"><svg><use href="#zin"/></svg></div><div class="tool"><svg><use href="#zout"/></svg></div><div class="tool"><svg><use href="#zfull"/></svg></div><div class="tool"><svg><use href="#zsel"/></svg></div><div class="tool"><svg><use href="#zlay"/></svg></div><div class="tool off"><svg><use href="#znat"/></svg></div><div class="tool"><svg><use href="#zlast"/></svg></div><div class="tool off"><svg><use href="#znext"/></svg></div><div class="tool"><svg><use href="#mapv"/></svg></div><div class="tool"><svg><use href="#map3"/></svg></div><div class="tool"><svg><use href="#bkm"/></svg></div><div class="tool"><svg><use href="#bkms"/></svg></div><div class="tool"><svg><use href="#clock"/></svg></div><div class="tool"><svg><use href="#refresh"/></svg></div>
  <div class="grip"></div>
  <div class="tool"><svg><use href="#ident"/></svg></div><div class="tool"><svg><use href="#table"/></svg></div><div class="tool"><svg><use href="#abacus"/></svg></div><div class="tool"><svg><use href="#gear"/></svg></div><div class="tool"><svg><use href="#sigma"/></svg></div><div class="tool dd"><svg><use href="#ruler"/></svg></div><div class="tool on"><svg><use href="#tips"/></svg></div><div class="tool dd off"><svg><use href="#action"/></svg></div><div class="tool dd"><svg><use href="#textann"/></svg></div>
</div>
<div class="toolrow d-flex align-items-center">
  <div class="tool"><svg><use href="#dsm"/></svg></div><div class="tool"><svg><use href="#newgpkg"/></svg></div><div class="tool"><svg><use href="#newshp"/></svg></div><div class="tool"><svg><use href="#newspl"/></svg></div><div class="tool"><svg><use href="#newmem"/></svg></div>
  <div class="vsep"></div><div class="tool"><svg><use href="#newvirt"/></svg></div><div class="vsep"></div><div class="grip"></div>
  <div class="tool off"><svg><use href="#pencils"/></svg></div><div class="tool"><svg><use href="#pencil"/></svg></div><div class="tool off"><svg><use href="#saveedit"/></svg></div><div class="tool off"><svg><use href="#addpoly"/></svg></div><div class="tool dd off"><svg><use href="#vertex"/></svg></div><div class="tool off"><svg><use href="#multi"/></svg></div><div class="tool off"><svg><use href="#trash"/></svg></div><div class="tool off"><svg><use href="#cut"/></svg></div><div class="tool off"><svg><use href="#copy"/></svg></div><div class="tool off"><svg><use href="#paste"/></svg></div><div class="tool off"><svg><use href="#undo"/></svg></div><div class="tool off"><svg><use href="#redo"/></svg></div>
  <div class="grip"></div>
  <div class="tool"><svg><use href="#lblY"/></svg></div><div class="tool"><svg><use href="#diag"/></svg></div><div class="vsep"></div><div class="tool"><svg><use href="#lblB"/></svg></div><div class="tool"><svg><use href="#lblR"/></svg></div><div class="vsep"></div>
  <div class="tool off"><svg><use href="#lblB"/></svg></div><div class="tool off"><svg><use href="#lblEye"/></svg></div><div class="tool off"><svg><use href="#lblMv"/></svg></div><div class="tool off"><svg><use href="#lblRot"/></svg></div><div class="tool off"><svg><use href="#lblEd"/></svg></div>
  <div class="grip"></div><div class="tool"><svg><use href="#db"/></svg></div><div class="grip"></div>
  <div class="tool"><svg><use href="#hex"/></svg></div><div class="tool"><svg><use href="#wirep"/></svg></div><div class="tool on"><svg><use href="#wires"/></svg></div><div class="tool"><svg><use href="#binoc"/></svg></div>
  <div class="grip"></div><div class="tool"><svg><use href="#help"/></svg></div><div class="grip"></div>
  <div class="tool"><svg><use href="#topo"/></svg></div><div class="tool"><svg><use href="#tabref"/></svg></div>
</div>
<div class="toolrow d-flex align-items-center">
  <div class="tool dd"><svg><use href="#selrect"/></svg></div><div class="tool dd"><svg><use href="#selform"/></svg></div><div class="tool dd"><svg><use href="#desel"/></svg></div><div class="tool"><svg><use href="#selloc"/></svg></div>
  <div class="gap1"></div><div class="grip"></div>
  <div class="tool"><svg><use href="#gsearch"/></svg></div><div class="tool"><svg><use href="#osm"/></svg></div>
  <div class="grip"></div>
  <div class="tool"><svg><use href="#python"/></svg></div><div class="tool"><svg><use href="#flame"/></svg></div><div class="tool"><svg><use href="#earth"/></svg></div><div class="tool"><svg><use href="#bow"/></svg></div><div class="tool"><svg><use href="#gident"/></svg></div>
  <div class="grip"></div><div class="gap2"></div><div class="grip"></div>
  <div class="tool dd off"><svg><use href="#splitf"/></svg></div><div class="tool off"><svg><use href="#splitp"/></svg></div><div class="tool off"><svg><use href="#splitv"/></svg></div><div class="tool off"><svg><use href="#merge"/></svg></div><div class="tool off"><svg><use href="#reshape"/></svg></div><div class="tool dd off"><svg><use href="#ring"/></svg></div><div class="tool dd off"><svg><use href="#ringo"/></svg></div><div class="tool dd off"><svg><use href="#ringn"/></svg></div><div class="tool dd off"><svg><use href="#ringm"/></svg></div><div class="tool off"><svg><use href="#ringm"/></svg></div><div class="tool dd off"><svg><use href="#veeoff"/></svg></div><div class="tool off"><svg><use href="#pj"/></svg></div><div class="tool off"><svg><use href="#pd"/></svg></div>
  <div class="gap3"></div><div class="more">»</div><div class="grip"></div><div class="tool"><svg><use href="#cy"/></svg></div>
  <div class="gap4"></div><div class="more">»</div><div class="grip"></div><div class="tool"><svg><use href="#profile"/></svg></div><div class="grip"></div><div class="tool"><svg><use href="#rv"/></svg></div>
</div>

<main class="d-flex" style="height:540px">
  <aside class="side">
    <div class="hgrip"></div>
    <div class="tl"><svg><use href="#avec"/></svg></div><div class="tl"><svg><use href="#aras"/></svg></div><div class="tl"><svg><use href="#amesh"/></svg></div><div class="tl"><svg><use href="#acom"/></svg></div><div class="tl"><svg><use href="#aspl"/></svg></div><div class="tl"><svg><use href="#avirt"/></svg></div><div class="tl"><svg><use href="#apg"/></svg><i class="arw"></i></div><div class="tl"><svg><use href="#awms"/></svg><i class="arw"></i></div><div class="tl"><svg><use href="#axyz"/></svg></div><div class="tl"><svg><use href="#awfs"/></svg><i class="arw"></i></div><div class="tl"><svg><use href="#newgpkg"/></svg><i class="arw"></i></div>
  </aside>
  <section class="dock">
    <div class="docktitle d-flex align-items-center"><span class="me-auto lt">Layers</span><svg width="11" height="11" class="me-1"><use href="#float"/></svg><svg width="11" height="11"><use href="#close"/></svg></div>
    <div class="d-flex align-items-center" style="height:30px;padding-left:8px">
      <svg width="206" height="20" viewBox="60 184 206 20">
        <path d="M75 187l-7 6" stroke="#8a4a20" stroke-width="2"/><path d="M61 190l3 1 2-2 6 6-5 6-6-3z" fill="#f2c84b"/><path d="M65 190l3-1 4 5-2 3z" fill="#d9573b"/><path d="M62 194l5 6" stroke="#d9573b" stroke-width="1.500"/>
        <g fill="#f4f4f4" stroke="#666"><path d="M86.500 191.500h9v9h-9z"/><path d="M88.500 189.500h9v9h-9z"/><path d="M90.500 187.500h8v9h-8z"/></g><path d="M94 186v11M91.500 190l2.500-3 2.500 3" stroke="#345" fill="none"/><svg x="95" y="196" width="6" height="6"><use href="#plus"/></svg>
        <path d="M111 194q7-8 14 0-7 6-14 0z" fill="#fff" stroke="#778"/><circle cx="118" cy="194" r="3" fill="#4a7bb5"/><path d="M111 191q7-6 14 0" fill="none" stroke="#667"/><path d="M122 200h6l-3 3z" fill="#444"/>
        <path d="M136.500 189.500h14l-5 5v7l-4-1v-6z" fill="#6b95c5" stroke="#47719f"/><path d="M136 187h15v3h-15z" fill="#fce94f" stroke="#c4a000" stroke-width=".6"/>
        <text x="161" y="198" font-family="Liberation Serif" font-size="17" fill="#7b4a8c" stroke="#7b4a8c" stroke-width=".4">ε</text><path d="M168.500 194.500h7v3l-2 1.500v3h-2.500v-3l-2.500-1.500z" fill="#bbb" stroke="#888" stroke-width=".8"/><path d="M182 193h7l-3.500 4z" fill="#555"/>
        <path d="M198 188.500h12M198 200.500h12M200.500 188v12" stroke="#888" fill="none"/><g fill="#fff" stroke="#ef9a1a" stroke-width="1.300"><rect x="201.500" y="190.500" width="3" height="3"/><rect x="201.500" y="196" width="3" height="3"/></g><path d="M206.500 187.500h4v7h2.500l-4.500 7-4.500-7h2.500z" fill="#5b8bc4" stroke="#2f5585" stroke-width=".8"/>
        <path d="M224 188.500h8M224 200.500h8M226.500 188v12" stroke="#888" fill="none"/><g fill="#fff" stroke="#ef9a1a" stroke-width="1.300"><rect x="227" y="190.500" width="3" height="3"/><rect x="227" y="196" width="3" height="3"/></g><path d="M231.500 201.500h4v-7h2.500l-4.500-7-4.500 7h2.500z" fill="#5b8bc4" stroke="#2f5585" stroke-width=".8"/>
        <rect x="248.500" y="187.500" width="11" height="11" fill="#f8f8f8" stroke="#777"/><rect x="256" y="196" width="6" height="5" rx="1" fill="#e14545"/><path d="M257 198.500h4" stroke="#fff"/>
      </svg>
    </div>
    <div class="tree">
      <div class="trow dim d-flex align-items-center"><i class="chk"></i><svg class="sym" viewBox="0 0 16 16"><circle cx="8" cy="7.500" r="3" fill="#5f9a5f" stroke="#3f5f3f"/></svg>schools_cleaned</div>
      <div class="trow d-flex align-items-center"><i class="chk"><svg width="12" height="12"><use href="#tick"/></svg></i><svg class="sym" viewBox="0 0 16 16"><circle cx="8" cy="7.500" r="3" fill="#a56d50" stroke="#63412f"/></svg>pofw</div>
      <div class="trow dim d-flex align-items-center"><i class="chk"></i><i class="sym sw" style="background:#ea7190"></i>Buffered<i class="chip"><svg width="14" height="14"><use href="#memchip"/></svg></i></div>
      <div class="trow dim d-flex align-items-center"><i class="chk"></i><svg class="sym" viewBox="0 0 16 16"><circle cx="8" cy="7.500" r="3" fill="#5f9a5f" stroke="#3f5f3f"/></svg>schools</div>
      <div class="trow dim d-flex align-items-center"><i class="chk"></i><svg class="sym me-1" viewBox="0 0 16 16"><path d="M0 7.500h14" stroke="#db6464" stroke-width="2"/></svg>waterways</div>
      <div class="trow dim d-flex align-items-center"><i class="chk"></i><svg class="sym me-1" viewBox="0 0 16 16"><path d="M0 7.500h14" stroke="#94a3a8" stroke-width="2"/></svg>roads</div>
      <div class="trow sel d-flex align-items-center"><i class="chk"><svg width="12" height="12"><use href="#tick"/></svg></i><i class="sym sw" style="background:#77cfc0"></i><u>Clipped [5]</u><i class="chip"><svg width="14" height="14"><use href="#memchip"/></svg></i></div>
      <div class="trow d-flex align-items-center"><i class="chk"><svg width="12" height="12"><use href="#tick"/></svg></i><i class="sym sw" style="background:#8d5a99"></i>buildings_cleaned<i class="chip"><svg width="14" height="14"><use href="#memchip"/></svg></i></div>
      <div class="trow d-flex align-items-center"><i class="chk"><svg width="12" height="12"><use href="#tick"/></svg></i><i class="sym sw" style="background:#987db7"></i>buildings</div>
      <div class="trow d-flex align-items-center"><i class="chk"><svg width="12" height="12"><use href="#tick"/></svg></i><i class="sym sw" style="background:#e15989"></i>landuse</div>
      <div class="trow d-flex align-items-center"><i class="chk"><svg width="12" height="12"><use href="#tick"/></svg></i><i class="sym sw" style="background:#f6e8e8"></i>lagos_admin_boundary</div>
    </div>
    <div class="d-flex align-items-start" style="border-top:1px solid #b4b4b4;margin-top:1px">
      <div class="tabx" style="width:64px;height:20px;background:#dcdcdc;line-height:20px">Browser</div>
      <div class="tabx" style="width:55px;height:22px;background:#f6f6f6;line-height:23px;margin-left:-1px">Layers</div>
    </div>
  </section>
  <section class="mapbox">
    <svg width="680" height="538" viewBox="453 161 680 538">
      <rect x="453" y="161" width="681" height="538" fill="#f6e8e8"/>
      <g stroke="#302a2c" stroke-width="1" stroke-linejoin="round" fill="#e15989">
        <path d="M452 160H630L640 173L651 182L658 190L663 202L668 219L672 229L680 236L695 245V248L701 254L699 285V295L701 297V333L698 342L694 343V380L693 425V444L683 446L682 463L686 465V481L682 490L676 496L672 510L670 520L662 537L658 550V563L657 570L658 575L671 577L674 579L689 579L691 583H696V655L693 660L694 672H751V601L760 595L770 592L777 585L783 584L790 591L798 597V601L802 599L826 610L828 619L830 613L856 625L858 630L861 632L859 645L857 655L790 700H452z"/>
        <path d="M852 660L853 667L843 675L840 671L828 680L832 688L826 691V695H843V700H792z"/>
        <path d="M860 646L862 641L866 641L865 644L869 645L866 650L862 651z"/>
        <path d="M898 412L936 503L929 508L921 510L923 520H910L909 548L925 548L928 591L920 600L917 595L910 601V604L904 606L901 604L882 623L877 625H873L870 624L862 620L813 600L816 591L802 584L803 579L796 573L797 567H800L800 558L805 553V543H810L811 524H822L823 541H828L827 526L834 525L835 512H839V510L834 509L840 504L846 493L851 492L865 488L881 478L884 485L891 481L897 413z"/>
        <path d="M1069 619L1097 617L1101 614L1105 617L1104 622L1098 624L1101 627L1103 633L1106 621L1110 619L1113 622L1115 616L1112 614L1121 613L1135 626V700H1073L1074 661L1075 653L1102 651L1105 643L1101 636L1069 637z"/>
        <path d="M1053 160L1061 192L1070 207L1078 200L1086 201L1089 207L1094 206L1109 225L1095 238L1128 283L1135 282V160H1075V167L1071 174L1066 176L1063 174L1068 168V160z"/>
        <path d="M985 433L987 434L989 438L994 437L997 446L986 449L981 439L984 437z"/>
      </g>
      <g stroke="#302a2c" stroke-width="1" stroke-linejoin="round" fill="#f6e8e8">
        <path d="M452 173L461 175L472 178L479 183L486 182L498 187L524 190L528 186L531 191L536 186L544 187L557 187L558 190L567 187L585 173L584 169L592 164L593 160H599V166L592 168L597 174L589 171L570 187L562 192V197L543 199L542 202H527L513 201L505 197L495 200L483 196L478 193L473 198L468 196L466 189L459 184L452 185z"/>
        <path d="M452 346L467 349L479 348L475 365L471 378L466 379L463 384L452 391z"/>
        <path d="M452 418L463 419L461 436L457 438L480 466L500 497L510 510L540 555L536 556L508 516L480 475L468 458L452 443z"/>
        <path d="M542 527L547 523L553 525L552 533L554 538L551 545L555 551L549 557L548 563L551 568L555 566L554 571L557 575L554 580L565 592L563 594L554 582L551 585L553 592L558 595L556 600L558 608L554 603L553 612L556 620V640L549 643L550 653L556 651L558 665L560 677L566 690L570 692L575 700H560L559 691L547 690L557 688L556 675L547 662L541 661L534 657L532 652L537 650L541 643L546 638L544 620L542 617L544 600L548 594L544 583V570L540 560L538 556L541 555L547 556V551L543 550L552 546L548 536L546 530z"/>
        <path d="M452 676L457 683L462 684L457 695L452 698z"/>
        <path d="M796 649L812 647L824 643L829 665L827 667L831 672L816 681L815 679L808 683L798 686L797 677L801 675z"/>
      </g>
      <path d="M453 355h3l-3 12" fill="#e15989" stroke="#302a2c"/>
      <g fill="none" stroke-linejoin="round">
        <path d="M523 202L510 228L470 267L467 272L458 347" stroke="#302a2c" stroke-width="3.800"/><path d="M524 200L510 228L470 267L467 272L458 348" stroke="#f6e8e8" stroke-width="1.800"/>
        <path d="M751 639L755 642L761 665L759 680L754 701" stroke="#302a2c" stroke-width="3.600"/><path d="M750 639L755 642L761 665L759 680L754 701" stroke="#f6e8e8" stroke-width="1.600"/>
        <path d="M857 656L840 668L790 701" stroke="#302a2c" stroke-width="3.800"/><path d="M861 653L840 668L790 701" stroke="#f6e8e8" stroke-width="1.800"/>
      </g>
      <g stroke="#302a2c" fill="#ff0" stroke-linejoin="round">
        <path fill-rule="evenodd" d="M1060 215L1066 211L1135 302V389L1112 421L1107 420V415L1112 415L1108 409L1112 402L1106 399L1113 391L1117 386L1115 382L1116 374L1110 370L1116 366L1118 359L1125 356L1124 352L1117 356L1115 360L1104 350L1096 356L1093 351L1095 348L1092 349L1083 354L1081 351L1072 362L1063 351L1058 342L1049 332L1070 313L1077 309L1078 301L1071 299L1073 290L1072 283L1068 276L1064 272L1066 268L1058 264L1040 281L1032 270L1028 274L1021 267L1013 283L1006 280V275L997 272L991 264L992 257L984 255L970 245L976 239L985 243L1000 246L1022 224L1045 238L1063 230L1067 231V227zM1082 325L1091 334L1083 342V344L1075 352L1068 345L1073 341L1071 336z"/>
        <path d="M904 495L913 484H915L916 489L908 498z"/>
        <path d="M452 629L458 627L462 600L468 597L477 602L471 609L481 615L458 643L452 639z"/>
        <path d="M482 615L489.500 620L469 643L465 638z"/><path d="M452 640l4 3-4 7z"/>
        <path d="M671 651L691 658L682 688L661 682z"/><path d="M657 699l4-4 4 4z"/>
        <path d="M766 671L776 669L775 665L786 663L788 675L783 676L778 679L767 679z"/>
      </g>
      <g fill="none" stroke="#302a2c">
        <path d="M603 397L624 394L627 398L633 399L634 408L638 410L640 437L635 440L637 449L632 460L634 477L603 477.500z"/>
        <path d="M614 481L618 478L635 479L633 490L629 491L622 488L614 489z"/><path d="M565.500 324.500l7.500 4-3 5-7-4z"/><path d="M623 679L628 677L635 688L632 690L626 684z"/>
      </g>
      <circle cx="514" cy="562" r="3.700" fill="#a56d50" stroke="#3a2a24"/>
      <g fill="#8d5a99" stroke="#222"><path d="M892.500 216.500h12.500l1 11-11-1v-4l-2.500-1z"/><path d="M895 222h9" stroke-dasharray="2 1.500"/><path d="M878 271l4-1 4 9-3 2-2-1z"/><path d="M903 361l6 5-2 3-5-5z"/></g>
      <!-- building footprints -->
      <g fill="none" stroke="#2b262b" stroke-linecap="round">
        <path stroke-width="2" d="M951 275h.1M951 281.500h.1M897 371h.1M997 390v2M906 372l1 3M922 433h.4M1056 503h.1M946 576h.1M960 572h.1M966 636l1 1M465 578v1M460 589h.1M490 617l.8.6M1087 247h.6M521 238.500l.6-.6M537 402h.6"/>
        <path stroke-width="1.300" d="M988 389h.1M979 401h.1M1003 449h.1M981 458h.1M990 463h.1M1013 472h.1"/>
        <path stroke-width="3.300" d="M988 186v1M1001.500 189h.5M974.500 231.500l1 1M1025 249h.5M911.500 343h.5M898.500 359l1-1M902 372l1-1M902 377.500l-.5 1M900.500 382l.5 1M1009 405h.1M857.500 433h1M1120 535h.5M951 601h.5M1062 600h.1M1076 208h.3M1115 381h.2M479 293.500h1M472 611.500l-1 1"/>
        <path stroke-width="2.600" d="M1009 187.500l2-1M632.500 187l1.500-1"/>
        <path stroke-width="4.300" d="M1011 412h.3M1054 222.500l1-1.500M1090 227.500h.4M596 327.500h.1"/>
        <path stroke-width="2.600" stroke-linecap="butt" d="M562.500 510l5-1M564 506.500l3-1M567.500 504l4 4M571 508l3 3M567.500 528.500l5-1M568 532l6-2"/>
      </g>
      <g fill="#2b262b"><rect x="927" y="631.500" width="7" height="7"/><rect x="926.500" y="640" width="7" height="8"/><rect x="934.500" y="640.500" width="7" height="7.500"/></g>
    </svg>
  </section>
  <section class="qms" style="margin-left:5px">
    <div class="docktitle d-flex align-items-center"><span class="me-auto qt">Search QMS</span><svg width="11" height="11" class="me-1"><use href="#float"/></svg><svg width="11" height="11"><use href="#close"/></svg></div>
    <div class="fld" style="height:21px;margin-top:1px;padding-left:2px;line-height:19px;color:#808080;letter-spacing:0">Search string...</div>
    <div class="d-flex" style="margin:6px 0 0 65px">
      <div class="btx text-center" style="width:84px;height:21px;line-height:19px;letter-spacing:-.05px">Filter by extent</div>
      <div class="btx d-flex align-items-center" style="width:72px;height:22px;margin-left:5px;padding:0 6px 0 4px">All<i class="arw ms-auto"></i></div>
    </div>
    <div class="qlist" style="margin-top:6px">
      <div style="height:15px;padding-left:3px;line-height:15px;letter-spacing:.05px">Last used:</div>
      <div class="qrow d-flex align-items-center" style="height:59px"><svg width="24" height="24" viewBox="0 0 24 24"><path d="M0 1h24v21H0z" fill="#fff"/><path d="M0 7l9 3 15-9v8L9 14z" fill="#8fc43c"/><path d="M0 6l12 5-4 3-8-3z" fill="#f08a2c"/><path d="M0 12l8 2L24 5v7L10 17l-10-1z" fill="#2fa17c"/><path d="M0 14l10 2 14-4v9q0 1-2 1H2q-2 0-2-1z" fill="#1c5f9b"/><text x="8.500" y="19.500" font-size="5" font-weight="700" font-family="Liberation Sans" fill="#fff" letter-spacing="-.3">ArcGIS</text></svg><div class="qtxt pt-0 mt-1"><b>ESRI Satellite (ArcGIS/<br>World_Imagery)</b>TMS <u>details</u>, <u>report a problem</u></div><i class="dot"></i><span class="btx addb">Add</span></div>
      <div class="qrow d-flex align-items-center" style="height:56px"><svg width="24" height="24"><use href="#qmap"/></svg><div class="qtxt"><b class="one">Esri World Imagery</b>TMS <u>details</u>, <u>report a problem</u></div><i class="dot"></i><span class="btx addb">Add</span></div>
      <div class="qrow d-flex align-items-center" style="height:59px"><svg width="24" height="24"><use href="#qmap"/></svg><div class="qtxt"><b>EOX::Maps - Sentinel-2<br>cloudless</b>TMS <u>details</u>, <u>report a problem</u></div><i class="dot"></i><span class="btx addb">Add</span></div>
      <div class="qrow d-flex align-items-center" style="height:59px"><svg width="24" height="24"><use href="#qmap"/></svg><div class="qtxt"><b>OpenStreetMap<br>Standard aka Mapnik</b>TMS <u>details</u>, <u>report a problem</u></div><i class="dot"></i><span class="btx addb">Add</span></div>
      <div class="qrow d-flex align-items-center" style="height:56px"><svg width="24" height="24"><use href="#qmap"/></svg><div class="qtxt"><b class="one">Google Satellite</b>TMS <u>details</u>, <u>report a problem</u></div><i class="dot"></i><span class="btx addb">Add</span></div>
      <svg width="226" height="14" viewBox="0 0 226 14" style="margin-top:105px"><rect x="-.5" y=".5" width="227" height="13" fill="#f8f8f8" stroke="#b4b4b4"/><path d="M13.500 0v14M196.500 0v14M210.500 0v14" stroke="#b4b4b4"/><rect x="197" y="1" width="13" height="12" fill="#e2e2e2"/><path d="M9 3.500v7l-4-3.500zM215 3.500v7l4-3.500z" fill="#555"/></svg>
    </div>
    <div class="geo d-flex align-items-center" style="height:33px;margin-top:3px;border:1px solid #b4b4b4;padding-left:30px;padding-top:5px"><svg width="11" height="12" viewBox="0 0 11 12" class="me-1"><path d="M0 9.500q2-1 2-5a3.500 3.500 0 0 1 7 0q0 4 2 5zM4 10.500h3L5.500 12z" fill="#fba932"/></svg><span class="gt"><u>Fresh geodata</u> for your project</span></div>
  </section>
</main>

<footer class="status d-flex align-items-center">
  <div class="fld d-flex align-items-center" style="width:200px;height:22px;color:#808080;padding-left:8px"><svg width="13" height="13" viewBox="0 0 13 13" style="margin-right:6px"><circle cx="5" cy="5" r="4.200" fill="none" stroke="#888" stroke-width="1.200"/><path d="M8 8l4.500 4.500" stroke="#888" stroke-width="1.500"/></svg>Type to locate (Ctrl+K)</div>
  <span style="width:57px;margin-left:363px;letter-spacing:-.5px">Coordinate</span>
  <div class="fld text-center" style="width:91px;height:22px;line-height:20px;letter-spacing:-.2px">102424,280892</div>
  <svg width="16" height="18" viewBox="0 0 16 18" style="margin-left:4px"><path d="M2 4q3-5 6 0l4 5q3 4-1 6-4 1-6-2L2 8q-2-2 0-4zM2 7l6-4M4 10l5-4M10 3l3-2M12 6l4-3M3 13l-3 2M11 11v3" fill="#ddd" stroke="#222" stroke-width="1.300"/></svg>
  <span style="width:29px;margin-left:12px">Scale</span>
  <div class="fld d-flex align-items-center" style="width:81px;height:22px;padding:0 0 0 3px;letter-spacing:-.15px">1:65246<span class="ms-auto border-start d-flex align-items-center" style="width:18px;height:20px;background:#f4f4f4"><i class="arw" style="margin-left:4px"></i></span></div>
  <svg width="12" height="15" viewBox="0 0 12 15" style="margin-left:12px"><path d="M2.500 8V4.500a3.500 3.500 0 0 1 7 0V8" fill="none" stroke="#777" stroke-width="1.500"/><rect y="7" width="12" height="8" rx="1.500" fill="#555"/></svg>
  <span style="width:48px;margin-left:8px;letter-spacing:-.6px">Magnifier</span>
  <div class="fld d-flex align-items-center" style="width:88px;height:22px;padding-left:4px;letter-spacing:-.1px">100%<svg class="ms-auto" width="14" height="20" viewBox="0 0 14 20"><path d="M.5 0v20" stroke="#b4b4b4"/><path d="M4 8l3.500-4L11 8zM4 12l3.500 4 3.500-4z" fill="#555"/></svg></div>
  <span style="width:51px;margin-left:8px">Rotation</span>
  <div class="fld d-flex align-items-center" style="width:84px;height:22px;padding-left:4px;letter-spacing:-.1px">0.0 °<svg class="ms-auto" width="14" height="20" viewBox="0 0 14 20"><path d="M.5 0v20" stroke="#b4b4b4"/><path d="M4 8l3.500-4L11 8zM4 12l3.500 4 3.500-4z" fill="#555"/></svg></div>
  <i class="chk" style="margin-left:6px"><svg width="12" height="12"><use href="#tick"/></svg></i>
  <span style="width:54px;margin-left:4px">Render</span>
  <svg width="14" height="12" viewBox="0 0 14 12"><ellipse cx="7" cy="6" rx="6.500" ry="5.500" fill="#888"/><path d="M0 6h14M1 3.500h12M1 8.500h12M7 0v12" stroke="#ddd" stroke-width=".7"/><ellipse cx="7" cy="6" rx="3.300" ry="5.500" fill="none" stroke="#ddd" stroke-width=".7"/></svg>
  <span style="width:78px;margin-left:4px">EPSG:26391</span>
  <svg width="17" height="15" viewBox="0 0 17 15"><ellipse cx="8" cy="6.500" rx="7.500" ry="6" fill="#555"/><path d="M9 10l5 5V9z" fill="#555"/><path d="M4 6.500h2M7.500 6.500h2M11 6.500h2" stroke="#fff" stroke-width="1.500"/></svg>
</footer>
</body>
</html>
